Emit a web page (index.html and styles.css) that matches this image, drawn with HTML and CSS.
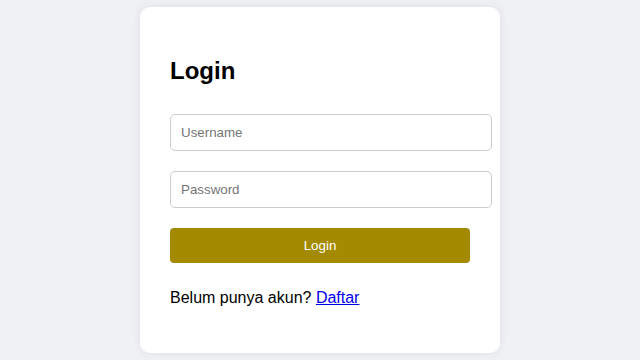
FILE: index.html
```html
<!DOCTYPE html>
<html lang="id">
<head>
    <meta charset="UTF-8">
    <meta name="viewport" content="width=device-width, initial-scale=1.0">
    <title>Login</title>
    <link rel="stylesheet" href="styles.css">
</head>
<body>

<div class="login-box">
    <h2>Login</h2>
    <form class="login-form" onsubmit="return false;">
        <input type="text" name="username" placeholder="Username" required>
        <input type="password" name="password" placeholder="Password" required>
        <button type="submit">Login</button>
    </form>
    <p>Belum punya akun? <a href="#">Daftar</a></p>
</div>

</body>
</html>
```

FILE: styles.css
```css
body {
    font-family: "Liberation Sans", Arial, sans-serif;
    background-color: #f0f1f5;
    margin: 0;
    height: 100vh;
    display: flex;
    justify-content: center;
    align-items: center;
}
.login-box {
    width: 300px;
    padding: 30px;
    background-color: white;
    border-radius: 10px;
    box-shadow: 0 0 10px rgba(0,0,0,0.08);
}
h2 {
    font-size: 24px;
    line-height: 28px;
    margin: 20px 0 29px;
}
.login-form {
    padding-bottom: 10px;
}
input {
    display: block;
    width: 100%;
    padding: 10px;
    margin: 0 0 20px;
    font-family: "Liberation Sans", Arial, sans-serif;
    font-size: 13.33px;
    line-height: 15px;
    border: 1px solid #ccc;
    border-radius: 5px;
}
button {
    display: block;
    width: 100%;
    padding: 10px;
    font-family: "Liberation Sans", Arial, sans-serif;
    font-size: 13.33px;
    line-height: 15px;
    background-color: #a48a00;
    color: white;
    border: none;
    border-radius: 4px;
    cursor: pointer;
}
p {
    font-size: 16px;
    margin: 16px 0;
}
a {
    color: #0000ee;
}
```
